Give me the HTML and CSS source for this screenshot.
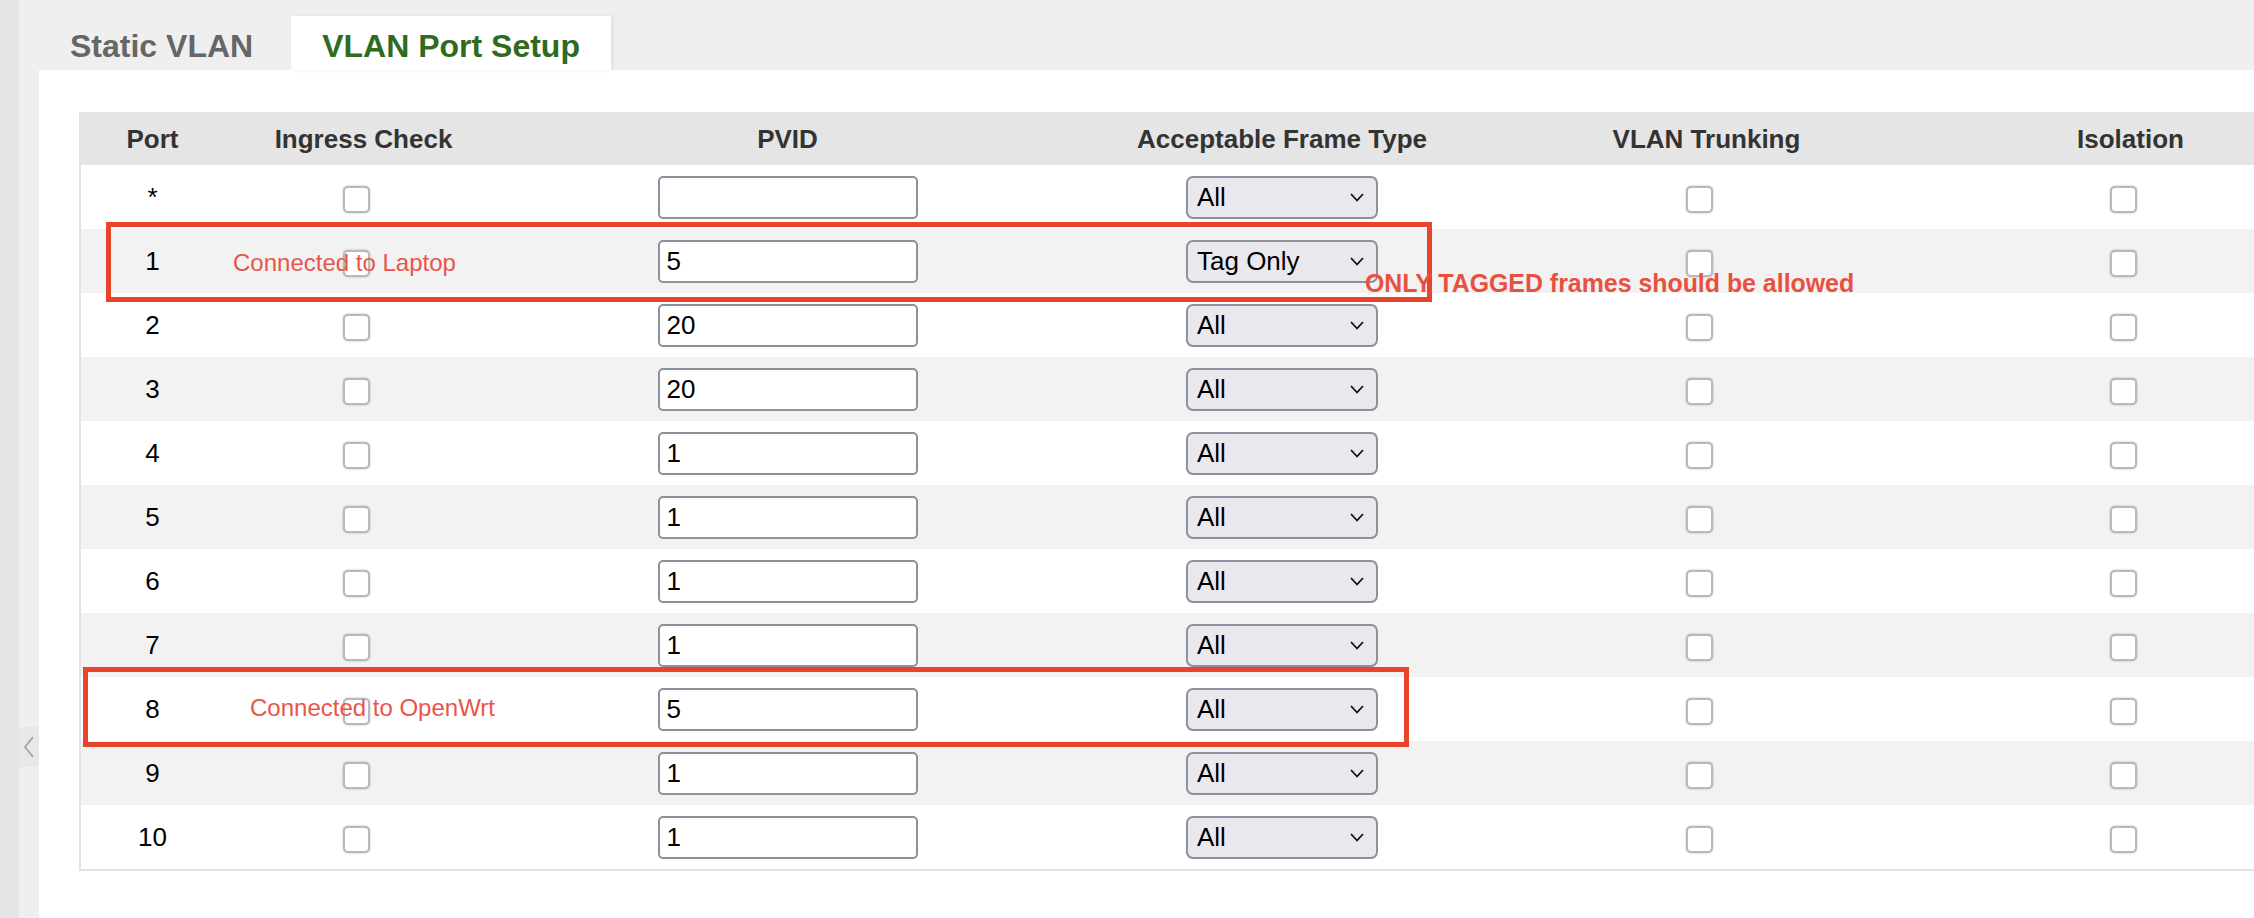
FILE: index.html
```html
<!DOCTYPE html>
<html lang="en">
<head>
<meta charset="utf-8">
<title>VLAN Port Setup</title>
<link rel="stylesheet" href="styles.css">
</head>
<body>
<div class="app">
  <div class="rail"></div>
  <div class="gutter">
    <button class="toggle" aria-label="Collapse">
      <svg width="12" height="22" viewBox="0 0 12 22"><path d="M10 1 L2 11 L10 21" fill="none" stroke="#a0a0a0" stroke-width="1.6"/></svg>
    </button>
  </div>
  <div class="main">
    <div class="tabs">
      <div class="tab">Static VLAN</div>
      <div class="tab active">VLAN Port Setup</div>
    </div>
    <div class="panel">
      <div class="stage">
        <table class="ports">
          <colgroup>
            <col class="c-port"><col class="c-ing"><col class="c-pvid"><col class="c-aft"><col class="c-trunk"><col class="c-iso">
          </colgroup>
          <thead>
            <tr><th>Port</th><th>Ingress Check</th><th>PVID</th><th>Acceptable Frame Type</th><th>VLAN Trunking</th><th>Isolation</th></tr>
          </thead>
          <tbody>
            <tr><td>*</td><td><span class="cb"></span></td><td><div class="inp"></div></td><td><div class="sel"><span>All</span><svg width="14" height="9" viewBox="0 0 14 9"><path d="M1 1 L7 7.5 L13 1" fill="none" stroke="#111" stroke-width="1.8"/></svg></div></td><td><span class="cb"></span></td><td><span class="cb"></span></td></tr>
            <tr><td>1</td><td><span class="cb"></span></td><td><div class="inp">5</div></td><td><div class="sel"><span>Tag Only</span><svg width="14" height="9" viewBox="0 0 14 9"><path d="M1 1 L7 7.5 L13 1" fill="none" stroke="#111" stroke-width="1.8"/></svg></div></td><td><span class="cb"></span></td><td><span class="cb"></span></td></tr>
            <tr><td>2</td><td><span class="cb"></span></td><td><div class="inp">20</div></td><td><div class="sel"><span>All</span><svg width="14" height="9" viewBox="0 0 14 9"><path d="M1 1 L7 7.5 L13 1" fill="none" stroke="#111" stroke-width="1.8"/></svg></div></td><td><span class="cb"></span></td><td><span class="cb"></span></td></tr>
            <tr><td>3</td><td><span class="cb"></span></td><td><div class="inp">20</div></td><td><div class="sel"><span>All</span><svg width="14" height="9" viewBox="0 0 14 9"><path d="M1 1 L7 7.5 L13 1" fill="none" stroke="#111" stroke-width="1.8"/></svg></div></td><td><span class="cb"></span></td><td><span class="cb"></span></td></tr>
            <tr><td>4</td><td><span class="cb"></span></td><td><div class="inp">1</div></td><td><div class="sel"><span>All</span><svg width="14" height="9" viewBox="0 0 14 9"><path d="M1 1 L7 7.5 L13 1" fill="none" stroke="#111" stroke-width="1.8"/></svg></div></td><td><span class="cb"></span></td><td><span class="cb"></span></td></tr>
            <tr><td>5</td><td><span class="cb"></span></td><td><div class="inp">1</div></td><td><div class="sel"><span>All</span><svg width="14" height="9" viewBox="0 0 14 9"><path d="M1 1 L7 7.5 L13 1" fill="none" stroke="#111" stroke-width="1.8"/></svg></div></td><td><span class="cb"></span></td><td><span class="cb"></span></td></tr>
            <tr><td>6</td><td><span class="cb"></span></td><td><div class="inp">1</div></td><td><div class="sel"><span>All</span><svg width="14" height="9" viewBox="0 0 14 9"><path d="M1 1 L7 7.5 L13 1" fill="none" stroke="#111" stroke-width="1.8"/></svg></div></td><td><span class="cb"></span></td><td><span class="cb"></span></td></tr>
            <tr><td>7</td><td><span class="cb"></span></td><td><div class="inp">1</div></td><td><div class="sel"><span>All</span><svg width="14" height="9" viewBox="0 0 14 9"><path d="M1 1 L7 7.5 L13 1" fill="none" stroke="#111" stroke-width="1.8"/></svg></div></td><td><span class="cb"></span></td><td><span class="cb"></span></td></tr>
            <tr><td>8</td><td><span class="cb"></span></td><td><div class="inp">5</div></td><td><div class="sel"><span>All</span><svg width="14" height="9" viewBox="0 0 14 9"><path d="M1 1 L7 7.5 L13 1" fill="none" stroke="#111" stroke-width="1.8"/></svg></div></td><td><span class="cb"></span></td><td><span class="cb"></span></td></tr>
            <tr><td>9</td><td><span class="cb"></span></td><td><div class="inp">1</div></td><td><div class="sel"><span>All</span><svg width="14" height="9" viewBox="0 0 14 9"><path d="M1 1 L7 7.5 L13 1" fill="none" stroke="#111" stroke-width="1.8"/></svg></div></td><td><span class="cb"></span></td><td><span class="cb"></span></td></tr>
            <tr><td>10</td><td><span class="cb"></span></td><td><div class="inp">1</div></td><td><div class="sel"><span>All</span><svg width="14" height="9" viewBox="0 0 14 9"><path d="M1 1 L7 7.5 L13 1" fill="none" stroke="#111" stroke-width="1.8"/></svg></div></td><td><span class="cb"></span></td><td><span class="cb"></span></td></tr>
          </tbody>
        </table>
        <div class="mark mark-1"></div>
        <div class="mark mark-2"></div>
        <div class="note note-1">Connected to Laptop</div>
        <div class="note note-2">Connected to OpenWrt</div>
        <div class="note note-3">ONLY TAGGED frames should be allowed</div>
      </div>
    </div>
  </div>
</div>
</body>
</html>
```
FILE: styles.css
```css
* { box-sizing: border-box; }
html, body { margin: 0; padding: 0; }
body {
  width: 2254px;
  height: 918px;
  overflow: hidden;
  background: #efefef;
  font-family: "Liberation Sans", Arial, sans-serif;
  color: #000;
}
.app {
  display: flex;
  height: 918px;
}
.rail {
  width: 19px;
  flex: none;
  background: #e5e5e5;
}
.gutter {
  width: 20px;
  flex: none;
  background: #efefef;
  padding-top: 727px;
}
.toggle {
  display: flex;
  align-items: center;
  justify-content: center;
  width: 20px;
  height: 40px;
  padding: 0;
  border: 0;
  background: #e8e8e8;
}
.main {
  flex: 1;
  min-width: 0;
  display: flex;
  flex-direction: column;
}
.tabs {
  display: flex;
  gap: 7px;
  margin-top: 16px;
  height: 54px;
}
.tab {
  padding: 6px 31px 0 31px;
  line-height: 48px;
  font-size: 32px;
  font-weight: bold;
  color: #666;
  white-space: nowrap;
}
.tab.active {
  background: #fff;
  color: #2f6b1f;
  box-shadow: 2px 0 4px rgba(0, 0, 0, 0.07);
  position: relative;
  z-index: 1;
}
.panel {
  flex: 1;
  background: #fff;
  padding: 42px 0 0 40px;
}
.stage {
  position: relative;
  width: 2261px;
}
.ports {
  width: 2261px;
  table-layout: fixed;
  border-collapse: separate;
  border-spacing: 0;
  border-left: 2px solid #e2e2e2;
  border-bottom: 2px solid #e2e2e2;
}
.c-port { width: 143px; }
.c-ing { width: 279px; }
.c-pvid { width: 569px; }
.c-aft { width: 420px; }
.c-trunk { width: 429px; }
.c-iso { width: 419px; }
.ports th {
  height: 53px;
  padding: 2px 0 0 0;
  background: #e5e5e5;
  color: #333;
  font-size: 26px;
  font-weight: bold;
  line-height: 51px;
  text-align: center;
  white-space: nowrap;
}
.ports td {
  height: 64px;
  padding: 0;
  font-size: 26px;
  line-height: 64px;
  text-align: center;
  vertical-align: middle;
}
.ports tbody tr:nth-child(even) td { background: #f2f2f2; }
.cb {
  display: inline-block;
  vertical-align: middle;
  width: 27px;
  height: 27px;
  margin-right: 14px;
  border: 2px solid #b9b9b9;
  border-radius: 5px;
  background: #fff;
  box-shadow: 0 0 2px rgba(0, 0, 0, 0.3);
}
.inp {
  width: 260px;
  height: 43px;
  margin: 0 auto;
  padding: 0 7px;
  border: 2px solid #8f8f9d;
  border-radius: 5px;
  background: #fff;
  font-size: 26px;
  line-height: 39px;
  text-align: left;
}
.sel {
  width: 192px;
  height: 43px;
  margin: 0 auto;
  padding: 0 12px 0 9px;
  display: flex;
  align-items: center;
  justify-content: space-between;
  border: 2px solid #8f8f9d;
  border-radius: 7px;
  background: #e9e9ed;
  font-size: 26px;
  line-height: 39px;
}
.mark {
  position: absolute;
  width: 1326px;
  height: 80px;
  border: 5px solid #e8432b;
}
.mark-1 { left: 27px; top: 110px; }
.mark-2 { left: 4px; top: 555px; }
.note {
  position: absolute;
  white-space: nowrap;
  color: #e9554a;
  font-size: 24px;
  line-height: 24px;
}
.note-1 { left: 154px; top: 139px; }
.note-2 { left: 171px; top: 584px; }
.note-3 {
  left: 1286px;
  top: 159px;
  font-size: 24.9px;
  line-height: 24.9px;
  font-weight: bold;
  color: #e8503f;
}
```
